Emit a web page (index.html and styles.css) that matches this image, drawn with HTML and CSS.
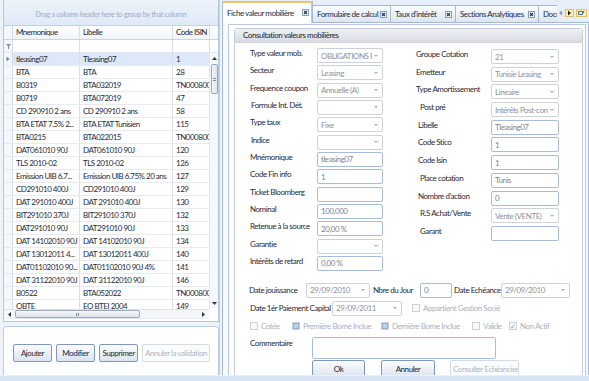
FILE: index.html
```html
<!DOCTYPE html>
<html lang="fr">
<head>
    <meta charset="UTF-8">
    <meta name="viewport" content="width=device-width, initial-scale=1.0">
    <title>Fiche valeur mobilière</title>
    <link rel="stylesheet" href="styles.css">
</head>
<body>
<div class="app">
    <div class="main">
        <div class="left">
            <div class="grid">
                <div class="group-panel">Drag a column header here to group by that column</div>
                <div class="grid-head">
                    <div class="ind"></div>
                    <div class="cell c1">Mnemonique</div>
                    <div class="cell c2">Libelle</div>
                    <div class="cell c3">Code ISIN</div>
                    <div class="gap-cell"></div>
                </div>
                <div class="filter-row">
                    <div class="ind"><svg width="5" height="5" viewBox="0 0 5 5"><path d="M0 0h5L3 2.3V5H2V2.3z" fill="#6f8fc2"/></svg></div>
                    <div class="cell c1"></div>
                    <div class="cell c2"></div>
                    <div class="cell c3"></div>
                    <div class="gap-cell"></div>
                </div>
                <div class="grid-body">
                    <div class="rows">
                        <div class="row selected"><div class="ind"><svg width="4" height="6" viewBox="0 0 4 6"><path d="M0.5 0.5L3.5 3L0.5 5.5z" fill="#6d84a4"/></svg></div><div class="cell c1">tleasing07</div><div class="cell c2">Tleasing07</div><div class="cell c3">1</div></div>
                        <div class="row"><div class="ind"></div><div class="cell c1">BTA</div><div class="cell c2">BTA</div><div class="cell c3">28</div></div>
                        <div class="row"><div class="ind"></div><div class="cell c1">B0319</div><div class="cell c2">BTA032019</div><div class="cell c3">TN0008000</div></div>
                        <div class="row"><div class="ind"></div><div class="cell c1">B0719</div><div class="cell c2">BTA072019</div><div class="cell c3">47</div></div>
                        <div class="row"><div class="ind"></div><div class="cell c1">CD 290910 2 ans</div><div class="cell c2">CD 290910 2 ans</div><div class="cell c3">58</div></div>
                        <div class="row"><div class="ind"></div><div class="cell c1">BTA ETAT 7.5% 2...</div><div class="cell c2">BTA ETAT Tunisien</div><div class="cell c3">115</div></div>
                        <div class="row"><div class="ind"></div><div class="cell c1">BTA0215</div><div class="cell c2">BTA022015</div><div class="cell c3">TN0008000</div></div>
                        <div class="row"><div class="ind"></div><div class="cell c1">DAT061010 90J</div><div class="cell c2">DAT061010 90J</div><div class="cell c3">120</div></div>
                        <div class="row"><div class="ind"></div><div class="cell c1">TLS 2010-02</div><div class="cell c2">TLS 2010-02</div><div class="cell c3">126</div></div>
                        <div class="row"><div class="ind"></div><div class="cell c1">Emission UIB 6.7...</div><div class="cell c2">Emission UIB 6.75% 20 ans</div><div class="cell c3">127</div></div>
                        <div class="row"><div class="ind"></div><div class="cell c1">CD291010 400J</div><div class="cell c2">CD291010 400J</div><div class="cell c3">129</div></div>
                        <div class="row"><div class="ind"></div><div class="cell c1">DAT 291010 400J</div><div class="cell c2">DAT 291010 400J</div><div class="cell c3">130</div></div>
                        <div class="row"><div class="ind"></div><div class="cell c1">BIT291010 370J</div><div class="cell c2">BIT291010 370J</div><div class="cell c3">132</div></div>
                        <div class="row"><div class="ind"></div><div class="cell c1">DAT291010 90J</div><div class="cell c2">DAT291010 90J</div><div class="cell c3">133</div></div>
                        <div class="row"><div class="ind"></div><div class="cell c1">DAT 14102010 90J</div><div class="cell c2">DAT 14102010 90J</div><div class="cell c3">134</div></div>
                        <div class="row"><div class="ind"></div><div class="cell c1">DAT 13012011 4...</div><div class="cell c2">DAT 13012011 400J</div><div class="cell c3">140</div></div>
                        <div class="row"><div class="ind"></div><div class="cell c1">DAT01102010 90...</div><div class="cell c2">DAT01102010 90J 4%</div><div class="cell c3">141</div></div>
                        <div class="row"><div class="ind"></div><div class="cell c1">DAT 31122010 90J</div><div class="cell c2">DAT 31122010 90J</div><div class="cell c3">146</div></div>
                        <div class="row"><div class="ind"></div><div class="cell c1">B0522</div><div class="cell c2">BTA052022</div><div class="cell c3">TN0008000</div></div>
                        <div class="row"><div class="ind"></div><div class="cell c1">OBTE</div><div class="cell c2">EO BTEI 2004</div><div class="cell c3">149</div></div>
                    </div>
                    <div class="vscroll">
                        <div class="sb-arrow"><svg width="5" height="3" viewBox="0 0 5 3"><path d="M0 3L2.5 0L5 3z" fill="#333"/></svg></div>
                        <div class="vthumb"><span></span></div>
                        <div class="sb-fill"></div>
                        <div class="sb-arrow"><svg width="5" height="3" viewBox="0 0 5 3"><path d="M0 0L2.5 3L5 0z" fill="#333"/></svg></div>
                    </div>
                </div>
                <div class="hscroll">
                    <div class="hbar">
                        <div class="sb-harrow"><svg width="3" height="5" viewBox="0 0 3 5"><path d="M3 0L0 2.5L3 5z" fill="#333"/></svg></div>
                        <div class="hthumb"><span></span></div>
                        <div class="sb-fill"></div>
                        <div class="sb-harrow"><svg width="3" height="5" viewBox="0 0 3 5"><path d="M0 0L3 2.5L0 5z" fill="#333"/></svg></div>
                    </div>
                </div>
            </div>
            <div class="actions">
                <button class="btn">Ajouter</button>
                <button class="btn">Modifier</button>
                <button class="btn">Supprimer</button>
                <button class="btn off">Annuler la validation</button>
            </div>
        </div>
        <div class="splitter"></div>
        <div class="right">
            <div class="tabs">
                <div class="tab active t1">Fiche valeur mobilière <svg class="x" width="7" height="7" viewBox="0 0 7 7"><rect x="0.5" y="0.5" width="6" height="6" fill="#fff" stroke="#8b9dba"/><path d="M2 2l3 3M5 2l-3 3" stroke="#1d2f4a" stroke-width="1.1"/></svg></div>
                <div class="tab t2">Formulaire de calcul <svg class="x" width="7" height="7" viewBox="0 0 7 7"><rect x="0.5" y="0.5" width="6" height="6" fill="#fff" stroke="#8b9dba"/><path d="M2 2l3 3M5 2l-3 3" stroke="#1d2f4a" stroke-width="1.1"/></svg></div>
                <div class="tab t3">Taux d'intérêt <svg class="x" width="7" height="7" viewBox="0 0 7 7"><rect x="0.5" y="0.5" width="6" height="6" fill="#fff" stroke="#8b9dba"/><path d="M2 2l3 3M5 2l-3 3" stroke="#1d2f4a" stroke-width="1.1"/></svg></div>
                <div class="tab t4">Sections Analytiques <svg class="x" width="7" height="7" viewBox="0 0 7 7"><rect x="0.5" y="0.5" width="6" height="6" fill="#fff" stroke="#8b9dba"/><path d="M2 2l3 3M5 2l-3 3" stroke="#1d2f4a" stroke-width="1.1"/></svg></div>
                <div class="tab t5">Documents</div>
                <div class="tab-nav">
                    <svg width="5" height="6" viewBox="0 0 5 6"><path d="M4 0.5L1 3L4 5.5z" fill="#8d98a8"/></svg>
                    <span class="nav-box"><svg width="5" height="6" viewBox="0 0 5 6"><path d="M1 0.5L4 3L1 5.5z" fill="#222"/></svg></span>
                    <span class="nav-box"><svg width="7" height="6" viewBox="0 0 7 6"><path d="M0.5 1.5h4v3h-4z" fill="none" stroke="#4a6a95"/><path d="M5 0.5L6.5 2L5 3.5z" fill="#4a6a95"/></svg></span>
                </div>
            </div>
            <div class="tab-body">
                <div class="inner">
                    <div class="groupbox">
                        <div class="gb-title">Consultation valeurs mobilières</div>
                        <div class="form">
                            <div class="form-cols">
                                <div class="col col-a">
                                    <div class="field"><span class="lbl">Type valeur mob.</span><div class="dd"><span>OBLIGATIONS P</span></div></div>
                                    <div class="field"><span class="lbl">Secteur</span><div class="dd"><span>Leasing</span></div></div>
                                    <div class="field"><span class="lbl">Frequence coupon</span><div class="dd"><span>Annuelle (A)</span></div></div>
                                    <div class="field"><span class="lbl nudge">Formule Int. Dét.</span><div class="dd"><span></span></div></div>
                                    <div class="field"><span class="lbl">Type taux</span><div class="dd"><span>Fixe</span></div></div>
                                    <div class="field"><span class="lbl nudge">Indice</span><div class="dd"><span></span></div></div>
                                    <div class="field"><span class="lbl">Mnémonique</span><div class="tx"><span>tleasing07</span></div></div>
                                    <div class="field"><span class="lbl">Code Fin info</span><div class="tx"><span>1</span></div></div>
                                    <div class="field"><span class="lbl">Ticket Bloomberg</span><div class="tx"><span></span></div></div>
                                    <div class="field"><span class="lbl">Nominal</span><div class="tx"><span>100,000</span></div></div>
                                    <div class="field"><span class="lbl">Retenue à la source</span><div class="tx"><span>20,00 %</span></div></div>
                                    <div class="field"><span class="lbl">Garantie</span><div class="dd"><span></span></div></div>
                                    <div class="field"><span class="lbl">Intérêts de retard</span><div class="tx"><span>0,00 %</span></div></div>
                                </div>
                                <div class="col col-b">
                                    <div class="field"><span class="lbl">Groupe Cotation</span><div class="dd"><span>21</span></div></div>
                                    <div class="field"><span class="lbl">Emetteur</span><div class="dd"><span>Tunisie Leasing</span></div></div>
                                    <div class="field"><span class="lbl">Type Amortissement</span><div class="dd"><span>Lineaire</span></div></div>
                                    <div class="field"><span class="lbl nudge4">Post pré</span><div class="dd"><span>Intérêts Post-con</span></div></div>
                                    <div class="field"><span class="lbl nudge2">Libelle</span><div class="tx"><span>Tleasing07</span></div></div>
                                    <div class="field"><span class="lbl nudge2">Code Stico</span><div class="tx"><span>1</span></div></div>
                                    <div class="field"><span class="lbl nudge2">Code Isin</span><div class="tx"><span>1</span></div></div>
                                    <div class="field"><span class="lbl nudge4">Place cotation</span><div class="tx"><span>Tunis</span></div></div>
                                    <div class="field"><span class="lbl nudge2">Nombre d'action</span><div class="tx"><span>0</span></div></div>
                                    <div class="field"><span class="lbl nudge4">R.S Achat/Vente</span><div class="dd"><span>Vente (VENTE)</span></div></div>
                                    <div class="field"><span class="lbl nudge4">Garant</span><div class="tx"><span></span></div></div>
                                </div>
                            </div>

                            <div class="line line-dates">
                                <span class="lbl w-jouis">Date jouissance</span>
                                <div class="dd w-d1"><span>29/09/2010</span></div>
                                <span class="lbl w-nbre">Nbre du Jour</span>
                                <div class="tx w-nb"><span>0</span></div>
                                <span class="lbl w-ech">Date Echéance</span>
                                <div class="dd w-d3"><span>29/09/2010</span></div>
                            </div>
                            <div class="line line-cap">
                                <span class="lbl w-cap">Date 1ér Paiement Capital</span>
                                <div class="dd w-d2"><span>29/09/2011</span></div>
                                <span class="check off w-app"><i class="box"></i>Appartient Gestion Socié</span>
                            </div>
                            <div class="line line-checks">
                                <span class="check off w-cot"><i class="box"></i>Cotée</span>
                                <span class="check off w-prem"><i class="box mixed"></i>Première Borne Inclue</span>
                                <span class="check off w-der"><i class="box mixed"></i>Dernière Borne Inclue</span>
                                <span class="check off w-val"><i class="box"></i>Valide</span>
                                <span class="check off"><i class="box checked">✓</i>Non Actif</span>
                            </div>
                            <div class="line line-comment">
                                <span class="lbl w-com">Commentaire</span>
                                <div class="area"></div>
                            </div>
                            <div class="line line-buttons">
                                <button class="btn w-ok">Ok</button>
                                <button class="btn w-ann">Annuler</button>
                                <button class="btn off w-cons">Consulter Echéancier</button>
                            </div>
                        </div>
                    </div>
                </div>
            </div>
        </div>
    </div>
    <div class="status"></div>
</div>
</body>
</html>
```

FILE: styles.css
```css
* {
    box-sizing: border-box;
}
body {
    margin: 0;
    font-family: "Segoe UI", Lato, sans-serif;
    font-size: 8px;
    letter-spacing: -0.45px;
    color: #1f2b3a;
    background: #dfe9f6;
}
.app {
    width: 589px;
    height: 381px;
    display: flex;
    flex-direction: column;
    overflow: hidden;
}
.main {
    height: 375px;
    flex: none;
    display: flex;
}
.status {
    flex: 1;
    background: #d6e4f5;
    border-top: 1px solid #e8f0fa;
}

/* ---- left: grid + actions ---- */
.left {
    width: 219px;
    padding-left: 3px;
    background: #eef3fa;
    display: flex;
    flex-direction: column;
}
.grid {
    height: 322px;
    flex: none;
    background: #fff;
    border: 1px solid #b3c5dc;
    border-top: none;
    display: flex;
    flex-direction: column;
}
.group-panel {
    height: 26px;
    flex: none;
    background: linear-gradient(#edf3fb, #dfe9f6);
    border-bottom: 1px solid #c3d3e7;
    color: #9aabc0;
    font-size: 7px;
    letter-spacing: -0.15px;
    display: flex;
    align-items: center;
    justify-content: center;
    padding-top: 2px;
}
.grid-head, .filter-row, .row {
    display: flex;
    flex: none;
}
.grid-head {
    height: 14px;
    background: linear-gradient(#ffffff, #f1f4f8);
    border-bottom: 1px solid #c9d5e4;
}
.filter-row {
    height: 13px;
    border-bottom: 1px solid #dfe6ef;
}
.ind {
    width: 9px;
    flex: none;
    border-right: 1px solid #d3dce8;
    background: #f4f7fb;
    display: flex;
    align-items: center;
    justify-content: center;
}
.cell {
    flex: none;
    border-right: 1px solid #d6dfea;
    padding-left: 3px;
    white-space: nowrap;
    overflow: hidden;
    line-height: 12px;
    letter-spacing: -0.5px;
}
.grid-head .cell {
    line-height: 13px;
    color: #1b2633;
}
.c1 { width: 67px; }
.c2 { width: 93px; }
.c3 { width: 36px; border-right: none; }
.gap-cell {
    flex: 1;
    border-left: 1px solid #d6dfea;
}
.grid-body {
    height: 256px;
    flex: none;
    display: flex;
    overflow: hidden;
}
.rows {
    width: 205px;
    overflow: hidden;
}
.row {
    height: 13px;
    border-bottom: 1px solid #e6ebf2;
}
.row.selected .cell {
    background: #dde9f8;
}
.vscroll {
    flex: 1;
    display: flex;
    flex-direction: column;
    align-items: center;
    background: #f7f8fa;
    border-left: 1px solid #e2e7ee;
}
.sb-arrow {
    height: 11px;
    display: flex;
    align-items: center;
}
.vthumb {
    width: 7px;
    height: 30px;
    border: 1px solid #9aa8b9;
    border-radius: 2px;
    background: linear-gradient(90deg, #f4f6f8, #dfe4ea);
    display: flex;
    align-items: center;
    justify-content: center;
}
.vthumb span {
    width: 3px;
    height: 3px;
    border-top: 1px solid #7e8ea2;
    border-bottom: 1px solid #7e8ea2;
}
.sb-fill {
    flex: 1;
}
.hscroll {
    height: 12px;
    flex: none;
    padding-right: 9px;
}
.hbar {
    height: 10px;
    display: flex;
    align-items: center;
    background: #f4f6f9;
    border-top: 1px solid #dfe5ed;
    border-bottom: 1px solid #e6ebf1;
}
.sb-harrow {
    width: 11px;
    display: flex;
    justify-content: center;
}
.hthumb {
    width: 125px;
    height: 8px;
    border: 1px solid #9aa8b9;
    border-radius: 2px;
    background: linear-gradient(#f6f8fa, #dde3ea);
    display: flex;
    align-items: center;
    justify-content: center;
}
.hthumb span {
    width: 3px;
    height: 3px;
    border-left: 1px solid #7e8ea2;
    border-right: 1px solid #7e8ea2;
}
.actions {
    flex: 1;
    margin-top: 4px;
    background: #fff;
    border: 1px solid #bccbdd;
    border-bottom: none;
    border-radius: 4px 4px 0 0;
    padding: 17px 0 0 9px;
    display: flex;
    align-items: flex-start;
    gap: 4px;
}
.btn {
    height: 18px;
    padding: 0 2px;
    font-family: inherit;
    font-size: 8px;
    letter-spacing: -0.45px;
    color: #1c2836;
    border: 1px solid #7f99ba;
    border-radius: 2px;
    background: linear-gradient(#fbfcfe, #dbe4ef);
    white-space: nowrap;
    overflow: hidden;
}
.actions .btn {
    width: 39px;
}
.actions .btn.off {
    width: 68px;
}
.btn.off {
    color: #aeb7c2;
    border-color: #d5dce4;
    background: #fbfcfd;
}

.splitter {
    width: 3px;
    background: #eef3fa;
    border-left: 1px solid #c5d1df;
}

/* ---- right: tabs + form ---- */
.right {
    flex: 1;
    display: flex;
    flex-direction: column;
}
.tabs {
    height: 22px;
    flex: none;
    display: flex;
    align-items: flex-end;
    background: #e6eef8;
}
.tab {
    height: 17px;
    flex: none;
    margin-right: -1px;
    padding: 0 3px 0 4px;
    border: 1px solid #a7b9d1;
    border-bottom: none;
    background: linear-gradient(#fcfdfe, #dbe5f2);
    display: flex;
    align-items: center;
    justify-content: space-between;
    white-space: nowrap;
    overflow: hidden;
    color: #1d2b3c;
}
.tab.active {
    height: 22px;
    margin-bottom: -1px;
    background: #fff;
    position: relative;
    z-index: 1;
    border-top-color: #b9c9dc;
    box-shadow: inset -2px 2px 0 -1px #f3c36b;
}
.t1 { width: 91px; }
.t2 { width: 79px; }
.t3 { width: 66px; }
.t4 { width: 84px; }
.t5 { width: 19px; justify-content: flex-start; border-right: none; }
.x {
    flex: none;
}
.tab-nav {
    flex: 1;
    align-self: center;
    display: flex;
    align-items: center;
    justify-content: flex-end;
    gap: 2px;
    padding: 4px 2px 0 0;
}
.nav-box {
    height: 8px;
    padding: 0 1px;
    background: #fbeeb9;
    border: 1px solid #e2c162;
    display: flex;
    align-items: center;
}
.tab-body {
    flex: 1;
    border: 1px solid #a7b9d1;
    background: #f7f9fc;
    padding: 1px 2px 1px 5px;
    display: flex;
}
.inner {
    flex: 1;
    background: #fff;
    border: 1px solid #b8c8dd;
    border-radius: 0 0 3px 3px;
    padding: 3px 2px 0 5px;
    display: flex;
}
.groupbox {
    flex: 1;
    border: 1px solid #c3cedb;
    border-radius: 3px;
    overflow: hidden;
    display: flex;
    flex-direction: column;
}
.gb-title {
    height: 14px;
    flex: none;
    padding-left: 8px;
    line-height: 13px;
    background: linear-gradient(#eef0f3, #d8dce1);
    border-bottom: 1px solid #cfd5dc;
    color: #1d2633;
}
.form {
    flex: 1;
    padding: 5px 0 0 15px;
    overflow: hidden;
}
.form-cols {
    display: flex;
    gap: 33px;
}
.col {
    display: flex;
    flex-direction: column;
}
.col-a {
    gap: 2.33px;
}
.col-b {
    gap: 2.7px;
    margin-top: 1px;
}
.field {
    display: flex;
    height: 15px;
}
.col-a .lbl {
    width: 67px;
}
.col-b .lbl {
    width: 75px;
}
.lbl {
    flex: none;
    line-height: 10px;
    white-space: nowrap;
    color: #1f2a37;
}
.nudge { padding-left: 1px; }
.nudge2 { padding-left: 2px; }
.nudge4 { padding-left: 4px; }
.dd, .tx {
    height: 15px;
    flex: none;
    display: flex;
    align-items: center;
    padding-left: 3px;
    border: 1px solid #cbd2da;
    border-radius: 2px;
    background: #fff;
    color: #8c939c;
}
.tx {
    border-color: #a5bcda;
    color: #7c848e;
}
.dd span, .tx span {
    flex: 1;
    min-width: 0;
    overflow: hidden;
    white-space: nowrap;
}
.dd::after {
    content: "";
    flex: none;
    margin: 0 4px 0 2px;
    border-left: 2px solid transparent;
    border-right: 2px solid transparent;
    border-top: 2px solid #a8b0ba;
}
.col-a .dd, .col-a .tx {
    width: 66px;
}
.col-b .dd, .col-b .tx {
    width: 68px;
}
.line {
    display: flex;
    align-items: center;
}
.line-dates {
    height: 15px;
    margin: 12px 0 0 -1px;
}
.w-jouis { width: 57px; }
.w-d1 { width: 64px; }
.w-nbre { width: 50px; padding-left: 3px; }
.w-nb { width: 32px; }
.w-ech { width: 49px; padding-left: 2px; }
.w-d3 { width: 69px; }
.line-cap {
    height: 15px;
    margin-top: 3px;
}
.w-cap { width: 82px; }
.w-d2 { width: 70px; }
.w-app { margin-left: 10px; }
.check {
    display: flex;
    align-items: center;
    gap: 3px;
    white-space: nowrap;
}
.check.off {
    color: #a9b3bf;
}
.box {
    width: 8px;
    height: 8px;
    flex: none;
    border: 1px solid #c9d1db;
    background: #f7f9fb;
    display: flex;
    align-items: center;
    justify-content: center;
    font-style: normal;
    font-size: 7px;
    letter-spacing: 0;
    color: #8e9bb0;
}
.box.mixed::before {
    content: "";
    width: 4px;
    height: 4px;
    background: #bcd0e8;
    border: 1px solid #93b1d8;
}
.line-checks {
    height: 9px;
    margin-top: 6px;
}
.w-cot { width: 42px; }
.w-prem { width: 89px; }
.w-der { width: 91px; }
.w-val { width: 37px; }
.line-comment {
    align-items: flex-start;
    margin-top: 6px;
}
.w-com {
    width: 62px;
    padding-top: 1px;
}
.area {
    width: 184px;
    height: 22px;
    border: 1px solid #a5bcda;
    border-radius: 2px;
}
.line-buttons {
    margin: 1px 0 0 62px;
}
.w-ok { width: 53px; }
.w-ann { width: 54px; margin-left: 16px; }
.w-cons { width: 69px; margin-left: 15px; }
```
